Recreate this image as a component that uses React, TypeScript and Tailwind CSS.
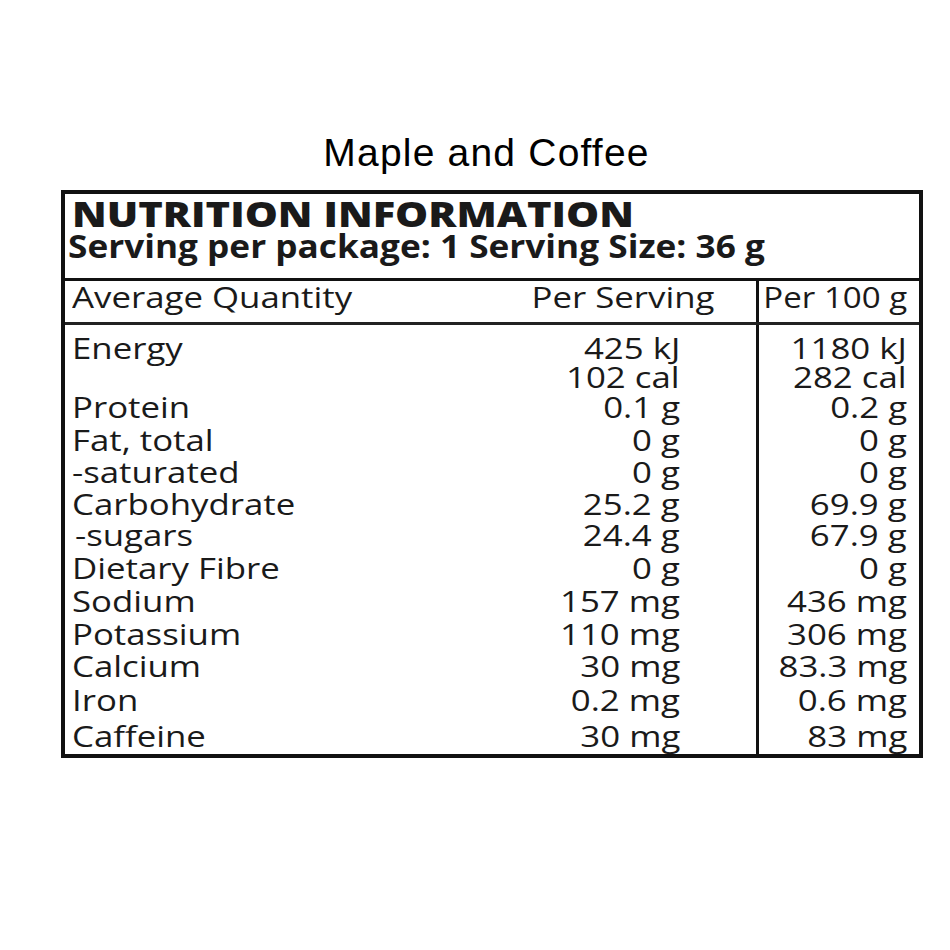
const rows: { label: string; serving: string; per100: string; h: string; indent?: boolean }[] = [
  { label: "Energy", serving: "425 kJ", per100: "1180 kJ", h: "h-[29px] leading-[29px]" },
  { label: "", serving: "102 cal", per100: "282 cal", h: "h-[29px] leading-[29px]" },
  { label: "Protein", serving: "0.1 g", per100: "0.2 g", h: "h-[32px] leading-[32px]" },
  { label: "Fat, total", serving: "0 g", per100: "0 g", h: "h-[33px] leading-[33px]" },
  { label: "-saturated", serving: "0 g", per100: "0 g", h: "h-[32px] leading-[32px]" },
  { label: "Carbohydrate", serving: "25.2 g", per100: "69.9 g", h: "h-[31px] leading-[31px]" },
  { label: "-sugars", serving: "24.4 g", per100: "67.9 g", h: "h-[32px] leading-[32px]", indent: true },
  { label: "Dietary Fibre", serving: "0 g", per100: "0 g", h: "h-[33px] leading-[33px]" },
  { label: "Sodium", serving: "157 mg", per100: "436 mg", h: "h-[33px] leading-[33px]" },
  { label: "Potassium", serving: "110 mg", per100: "306 mg", h: "h-[33px] leading-[33px]" },
  { label: "Calcium", serving: "30 mg", per100: "83.3 mg", h: "h-[32px] leading-[32px]" },
  { label: "Iron", serving: "0.2 mg", per100: "0.6 mg", h: "h-[35px] leading-[35px]" },
  { label: "Caffeine", serving: "30 mg", per100: "83 mg", h: "h-[37px] leading-[37px]" },
];

// the label artwork is set wide, so the body copy gets a horizontal stretch
const wideL = "inline-block origin-left scale-x-[1.2]";
const wideR = "inline-block origin-right scale-x-[1.2]";

export default function App() {
  return (
    <div className="w-[950px] h-[950px] bg-white pt-[133px] pl-[61px]">
      <div className="w-[862px] pr-[11px] text-center text-[39px] leading-[39px] tracking-[1.2px] text-black font-['Liberation_Sans',Arial,sans-serif]">
        Maple and Coffee
      </div>

      <div className="mt-[18px] w-[862px] border-4 border-[#111] text-[#1a1a1a] font-['Open_Sans',sans-serif] font-medium">
        {/* heading */}
        <div className="h-[87px] border-b-[3px] border-[#111] pt-[2px] font-extrabold">
          <div className="pl-[7px] text-[35px] leading-[35px]">
            <span className="inline-block origin-left scale-x-[1.19]">NUTRITION INFORMATION</span>
          </div>
          <div className="pl-[3px] text-[32px] leading-[30px] font-bold">
            <span className="inline-block origin-left scale-x-[1.1]">Serving per package: 1 Serving Size: 36 g</span>
          </div>
        </div>

        {/* column titles */}
        <div className="flex h-[44px] border-b-[3px] border-[#222] text-[29px] leading-[31px]">
          <div className="flex w-[691px] justify-between pl-[7px] pr-[42px]">
            <span className={wideL}>Average Quantity</span>
            <span className={wideR}>Per Serving</span>
          </div>
          <div className="flex flex-1 justify-end border-l-[3px] border-[#111] pr-[12px]">
            <span className="inline-block origin-right scale-x-[1.14]">Per 100 g</span>
          </div>
        </div>

        {/* values */}
        <div className="flex text-[29px]">
          <div className="w-[691px] pt-[8px]">
            {rows.map((r, i) => (
              <div key={i} className={`flex justify-between pr-[76px] ${r.indent ? "pl-[10px]" : "pl-[7px]"} ${r.h}`}>
                <span className={wideL}>{r.label}</span>
                <span className={wideR}>{r.serving}</span>
              </div>
            ))}
          </div>
          <div className="flex-1 border-l-[3px] border-[#111] pt-[8px] pr-[12px]">
            {rows.map((r, i) => (
              <div key={i} className={`flex justify-end ${r.h}`}>
                <span className={wideR}>{r.per100}</span>
              </div>
            ))}
          </div>
        </div>
      </div>
    </div>
  );
}
